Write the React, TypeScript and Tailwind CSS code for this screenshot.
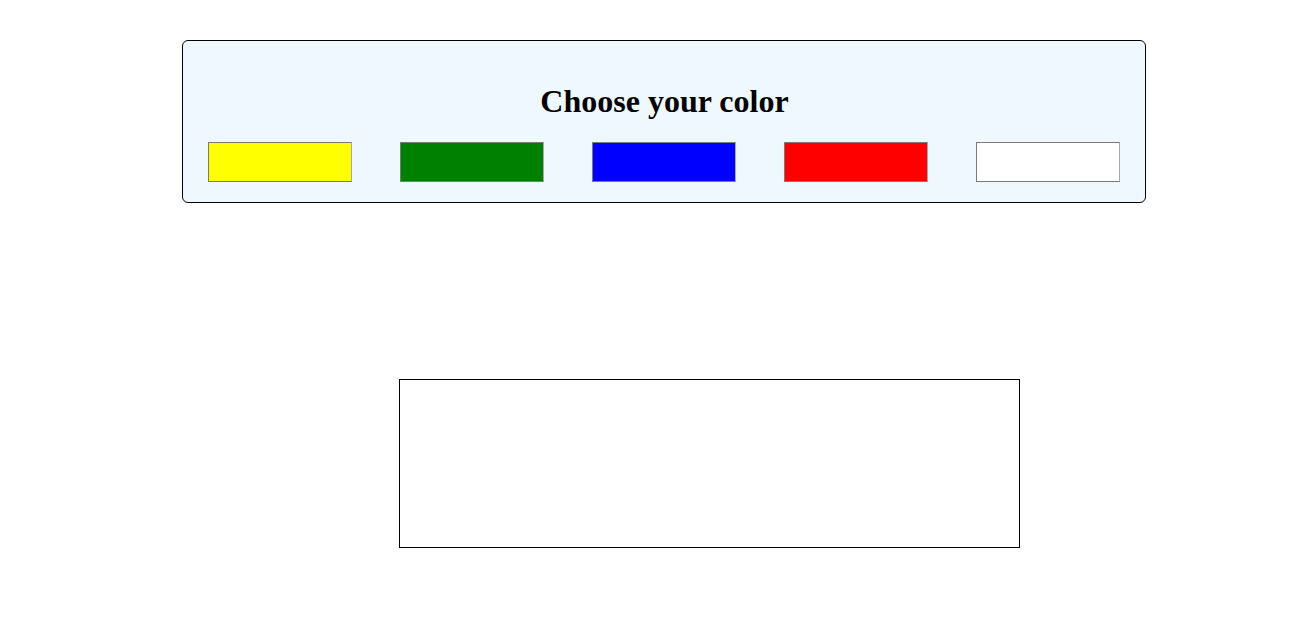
export default function App() {
  const colors = ['bg-[#ffff00]', 'bg-[#008000]', 'bg-[#0000ff]', 'bg-[#ff0000]', 'bg-white'];

  return (
    <div className="min-h-[629px] bg-white font-['Liberation_Serif',serif] text-black">
      {/* Color picker panel */}
      <div className="ml-[182px] pt-[40px]">
        <div className="w-[964px] h-[163px] rounded-[6px] border border-black bg-[#f0f8ff] flex flex-col">
          <h2 className="text-center text-[32px] font-bold leading-none mt-[44px] pl-[1px]">Choose your color</h2>
          <div className="flex justify-between px-[25px] mt-[25px]">
            {colors.map((c) => (
              <button
                key={c}
                className={`w-[144px] h-[40px] border border-[#7a7a7a] border-r-[#a8a8a8] ${c}`}
              />
            ))}
          </div>
        </div>
      </div>

      {/* Canvas area */}
      <div className="ml-[399px] mt-[176px] w-[621px] h-[169px] border border-black bg-white" />
    </div>
  );
}
